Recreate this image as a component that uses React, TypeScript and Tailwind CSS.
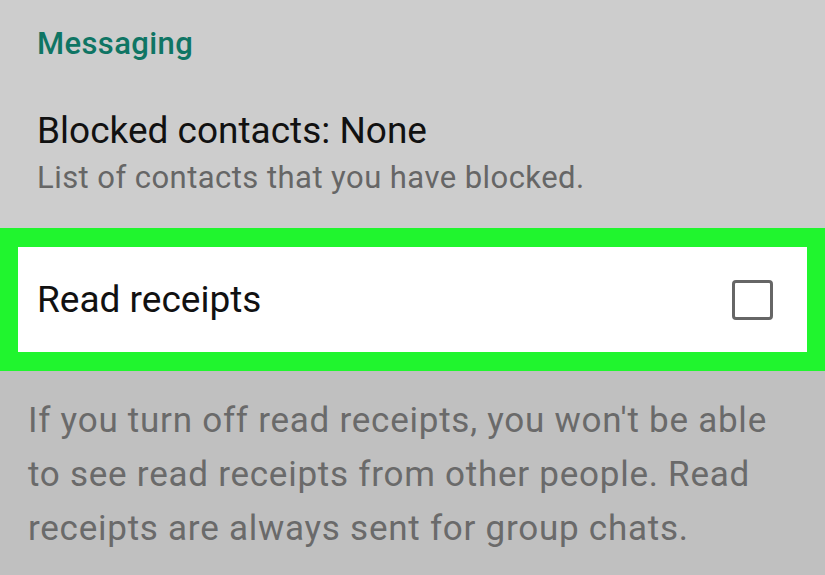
export default function App() {
  return (
    <div className="w-[825px] h-[575px] overflow-hidden flex flex-col" style={{ fontFamily: 'Roboto, "Noto Sans", sans-serif' }}>
      <div className="bg-[#cdcdcd] h-[228px] pl-[37px] flex flex-col">
        <div className="pt-[24px] text-[31px] leading-[40px] font-medium tracking-[0.4px] text-[#0f7564]">Messaging</div>
        <div className="pt-[45px] text-[37px] leading-[44px] text-[#111]">Blocked contacts: None</div>
        <div className="pt-[7px] text-[31px] leading-[36px] tracking-[0.45px] text-[#666]">List of contacts that you have blocked.</div>
      </div>
      <div className="bg-[#20f52e] h-[143px] px-[18px] py-[19px] flex">
        <div className="bg-white flex-1 flex items-center justify-between pl-[19px] pr-[34px]">
          <span className="text-[37px] text-[#111]">Read receipts</span>
          <div className="w-[41px] h-[40px] border-[3px] border-[#666] rounded-[4px]" />
        </div>
      </div>
      <div className="bg-[#c0c0c0] flex-1 pl-[28px] pt-[23px]">
        <p className="text-[35px] leading-[54px] tracking-[0.75px] text-[#6a6a6a] whitespace-nowrap">
          If you turn off read receipts, you won't be able<br />
          to see read receipts from other people. Read<br />
          receipts are always sent for group chats.
        </p>
      </div>
    </div>
  );
}
